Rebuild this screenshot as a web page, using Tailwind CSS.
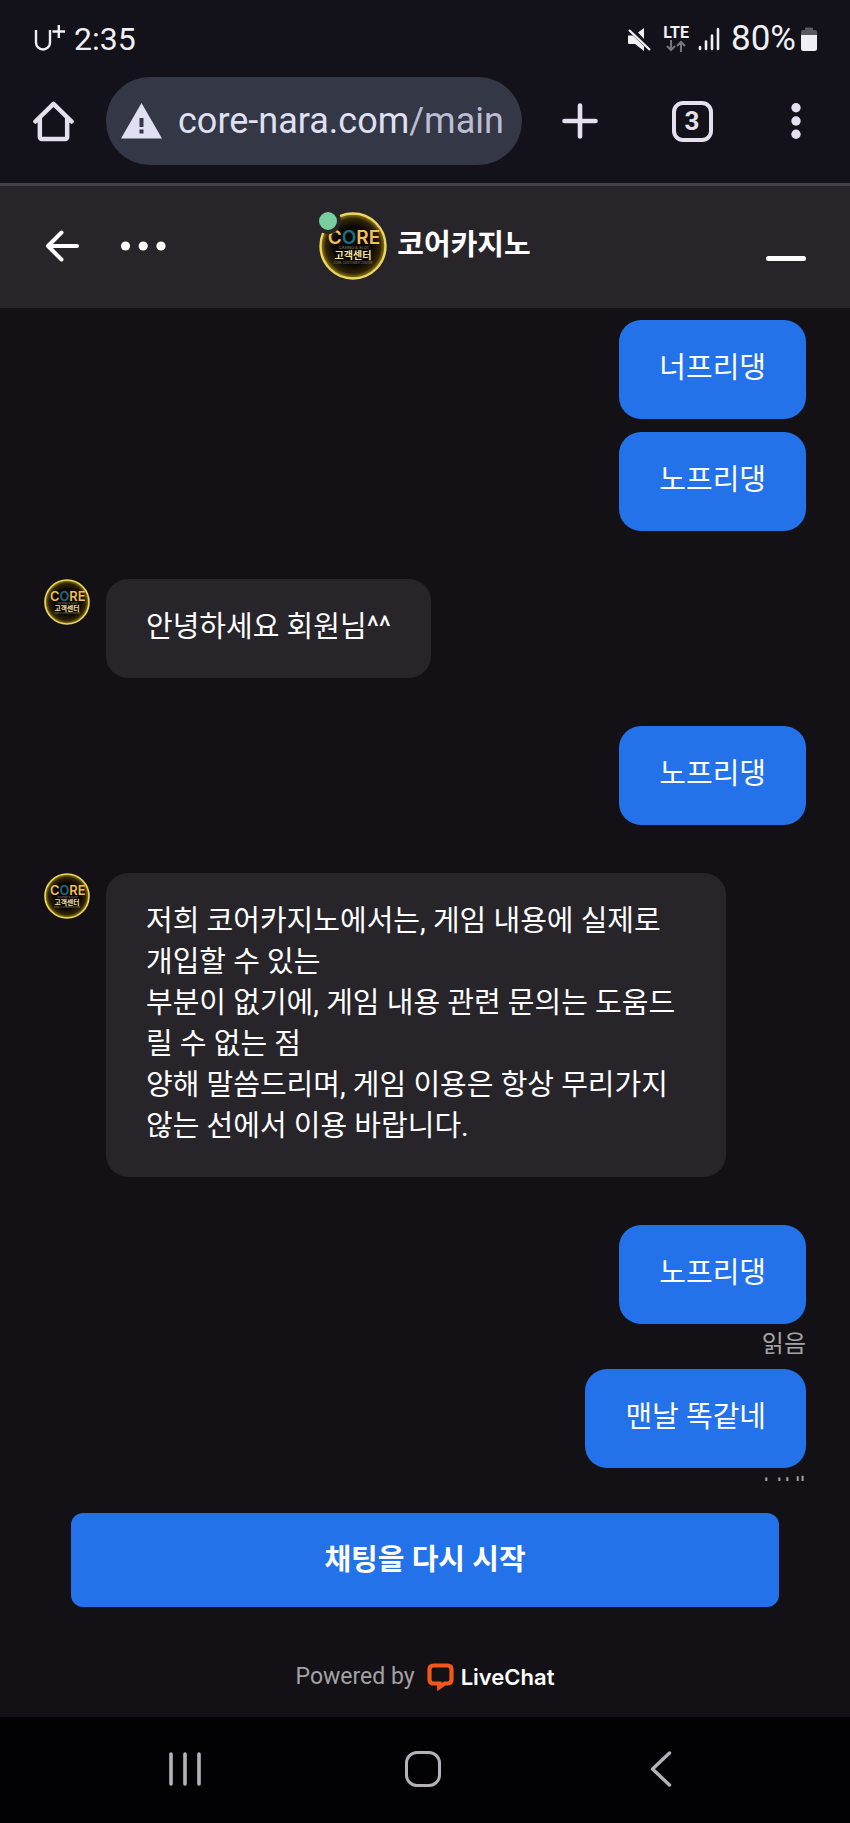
<!DOCTYPE html>
<html lang="ko">
<head>
    <meta charset="UTF-8">
    <meta name="viewport" content="width=device-width, initial-scale=1.0">
    <title>코어카지노</title>
    <script src="https://cdn.jsdelivr.net/npm/@tailwindcss/browser@4"></script>
</head>
<body class="h-screen flex flex-col bg-[#131116] text-white font-['Roboto','Noto_Sans_CJK_KR',sans-serif]">

<!-- Status bar -->
<div class="h-[77px] shrink-0 flex items-center justify-between pl-[34px] pr-8 bg-[#13111a] text-[#f0eff4] leading-[36px]">
    <div class="flex items-center gap-2 text-[32px]">
        <svg class="w-8 h-7" viewBox="0 0 32 28" fill="none" stroke="currentColor" stroke-width="2.400">
            <path d="M2 5v12.500a7 7 0 0 0 14 0V5M18.500 6.500H31M24.800 0v13"/>
        </svg>
        <span>2:35</span>
    </div>
    <div class="flex items-center text-[35px]">
        <svg class="w-6 h-6" viewBox="0 0 24 24" fill="currentColor">
            <path d="M1 8.500h5L17 19v5l-9-7H2a1 1 0 0 1-1-1zM11 5.500l6-4.500v11z"/>
            <path d="M2 1.500l21 20.500" stroke="#13111a" stroke-width="4.500"/>
            <path d="M2 3l21 20" stroke="currentColor" stroke-width="2.400"/>
        </svg>
        <div class="ml-3 flex flex-col items-center">
            <span class="text-[16px] leading-[14px] font-bold">LTE</span>
            <svg class="w-5 h-3" viewBox="0 0 20 12" fill="none" stroke="#77757d" stroke-width="2">
                <path d="M5 0v10M1 6l4 4 4-4M15 12V2M11 6l4-4 4 4"/>
            </svg>
        </div>
        <svg class="ml-2 w-6 h-6" viewBox="0 0 24 24" fill="none" stroke="currentColor" stroke-width="2.600" stroke-linecap="round">
            <path d="M3 20v2M9 14.500V22M15 8.500V22M21 2v20"/>
        </svg>
        <span class="ml-2.5">80%</span>
        <svg class="ml-1 w-[18px] h-6" viewBox="0 0 18 24">
            <path d="M5 1.500a1 1 0 0 1 1-1h6a1 1 0 0 1 1 1V3h2a2 2 0 0 1 2 2v4H1V5a2 2 0 0 1 2-2h2z" fill="#5a5960"/>
            <path d="M1 8h16v13.500a2.500 2.500 0 0 1-2.500 2.500h-11A2.500 2.500 0 0 1 1 21.500z" fill="currentColor"/>
        </svg>
    </div>
</div>

<!-- Browser toolbar -->
<nav class="h-[106px] shrink-0 flex items-start pr-1.5 bg-[#13111a] text-[#e4e0ee]">
    <button aria-label="홈" class="w-[106px] h-[88px] flex items-center justify-center">
        <svg class="w-[41px] h-[41px]" viewBox="0 0 42 42" fill="none" stroke="currentColor" stroke-width="4.600" stroke-linejoin="round" stroke-linecap="round">
            <path d="M2.500 21L21 3l18.500 18M7 17.500V37a2 2 0 0 0 2 2h24a2 2 0 0 0 2-2V17.500"/>
        </svg>
    </button>
    <button aria-label="주소창" class="flex-1 min-w-0 mr-0.5 h-[88px] pl-[15px] flex items-center gap-4 rounded-full bg-[#343746] text-[#dfe0f2]">
        <svg class="w-[41px] h-9 shrink-0" viewBox="0 0 41 36">
            <path d="M20.500 0L41 35.500H0z" fill="currentColor"/>
            <path d="M18.500 15h4v9h-4zM18.500 26.500h4v4h-4z" fill="#343746"/>
        </svg>
        <span class="text-[36px] leading-[44px] whitespace-nowrap">core-nara.com<span class="text-[#bcbdd0]">/main</span></span>
    </button>
    <button aria-label="새 탭" class="w-28 h-[88px] flex items-center justify-center">
        <svg class="w-9 h-9" viewBox="0 0 36 36" stroke="currentColor" stroke-width="4.600" stroke-linecap="round">
            <path d="M18 2.500v31M2.500 18h31"/>
        </svg>
    </button>
    <button aria-label="탭 3개" class="w-28 h-[88px] flex items-center justify-center">
        <span class="w-[41px] h-[41px] flex items-center justify-center rounded-[11px] border-4 border-current text-[26px] leading-[30px] font-bold">3</span>
    </button>
    <button aria-label="메뉴" class="w-24 h-[88px] flex items-center justify-center">
        <svg class="w-2.5 h-9" viewBox="0 0 10 36" fill="currentColor">
            <circle cx="5" cy="4.700" r="4.700"/><circle cx="5" cy="18" r="4.700"/><circle cx="5" cy="31.300" r="4.700"/>
        </svg>
    </button>
</nav>

<!-- Chat header -->
<header class="h-[125px] shrink-0 grid grid-cols-[1fr_auto_1fr] items-center px-11 pb-[3px] bg-[#27252a] border-t-3 border-[#434248]">
    <div class="flex items-center gap-10">
        <button aria-label="뒤로">
            <svg class="w-9 h-9" viewBox="0 0 36 36" fill="none" stroke="currentColor" stroke-width="4" stroke-linecap="round" stroke-linejoin="round">
                <path d="M17.500 4.500L4 18l13.500 13.500M4 18h29"/>
            </svg>
        </button>
        <button aria-label="더보기">
            <svg class="w-12 h-9" viewBox="0 0 48 36" fill="currentColor">
                <circle cx="5.500" cy="18" r="4.600"/><circle cx="23.200" cy="18" r="4.600"/><circle cx="41" cy="18" r="4.600"/>
            </svg>
        </button>
    </div>
    <div class="flex items-center gap-2.5">
        <div class="relative">
            <svg class="w-[68px] h-[68px]" viewBox="0 0 68 68">
                <defs>
                    <radialGradient id="gold">
                        <stop offset="0.6" stop-color="#0b0802"/>
                        <stop offset="0.84" stop-color="#2f2404"/>
                        <stop offset="1" stop-color="#a08620"/>
                    </radialGradient>
                </defs>
                <circle cx="34" cy="34" r="32.5" fill="url(#gold)" stroke="#ead75c" stroke-width="2.400"/>
                <g font-family="Inter, sans-serif" text-anchor="middle">
                    <text x="35" y="32" font-size="19" font-weight="600" fill="#f0bd55">C<tspan fill="#1c6c86">O</tspan>RE</text>
                    <text x="35" y="37" font-size="4" fill="#8d8778">CASINO &amp; SLOT</text>
                    <text x="34" y="47" font-size="10" font-weight="700" fill="#f3e3a4" font-family="Noto Sans CJK KR, sans-serif">고객센터</text>
                    <text x="34" y="52" font-size="3" fill="#8d8778">CORE CUSTOMER CENTER</text>
                </g>
            </svg>
            <span class="absolute -left-1 -top-1 w-[26px] h-[26px] rounded-full bg-[#79ce9f] border-4 border-[#27252a]"></span>
        </div>
        <h1 class="text-[29px] leading-[41px] font-bold">코어카지노</h1>
    </div>
    <button aria-label="최소화" class="justify-self-end h-9 flex items-end pb-[3px]">
        <span class="w-10 h-[5px] rounded-full bg-white"></span>
    </button>
</header>

<!-- Messages -->
<main class="flex-1 min-h-0 overflow-hidden flex flex-col gap-12 px-11 pt-3 text-[29px] leading-[41px]">
    <div class="flex flex-col items-end gap-[13px]">
        <p class="px-10 pt-7 pb-[30px] rounded-[22px] bg-[#2472ea]">너프리댕</p>
        <p class="px-10 pt-7 pb-[30px] rounded-[22px] bg-[#2472ea]">노프리댕</p>
    </div>
    <div class="flex items-start gap-4">
        <svg class="w-[46px] h-[46px] shrink-0" viewBox="0 0 68 68">
            <circle cx="34" cy="34" r="32.5" fill="url(#gold)" stroke="#ead75c" stroke-width="2.400"/>
            <g font-family="Inter, sans-serif" text-anchor="middle">
                <text x="35" y="32" font-size="19" font-weight="600" fill="#f0bd55">C<tspan fill="#1c6c86">O</tspan>RE</text>
                <text x="35" y="37" font-size="4" fill="#8d8778">CASINO &amp; SLOT</text>
                <text x="34" y="47" font-size="10" font-weight="700" fill="#f3e3a4" font-family="Noto Sans CJK KR, sans-serif">고객센터</text>
                <text x="34" y="52" font-size="3" fill="#8d8778">CORE CUSTOMER CENTER</text>
            </g>
        </svg>
        <p class="px-10 pt-7 pb-[30px] rounded-[22px] bg-[#27252a]">안녕하세요 회원님^^</p>
    </div>
    <div class="flex flex-col items-end">
        <p class="px-10 pt-7 pb-[30px] rounded-[22px] bg-[#2472ea]">노프리댕</p>
    </div>
    <div class="flex items-start gap-4">
        <svg class="w-[46px] h-[46px] shrink-0" viewBox="0 0 68 68">
            <circle cx="34" cy="34" r="32.5" fill="url(#gold)" stroke="#ead75c" stroke-width="2.400"/>
            <g font-family="Inter, sans-serif" text-anchor="middle">
                <text x="35" y="32" font-size="19" font-weight="600" fill="#f0bd55">C<tspan fill="#1c6c86">O</tspan>RE</text>
                <text x="35" y="37" font-size="4" fill="#8d8778">CASINO &amp; SLOT</text>
                <text x="34" y="47" font-size="10" font-weight="700" fill="#f3e3a4" font-family="Noto Sans CJK KR, sans-serif">고객센터</text>
                <text x="34" y="52" font-size="3" fill="#8d8778">CORE CUSTOMER CENTER</text>
            </g>
        </svg>
        <p class="max-w-[620px] px-10 pt-7 pb-[30px] rounded-[22px] bg-[#27252a]">저희 코어카지노에서는, 게임 내용에 실제로 개입할 수 있는<br>부분이 없기에, 게임 내용 관련 문의는 도움드릴 수 없는 점<br>양해 말씀드리며, 게임 이용은 항상 무리가지 않는 선에서 이용 바랍니다.</p>
    </div>
    <div class="flex flex-col items-end">
        <p class="px-10 pt-7 pb-[30px] rounded-[22px] bg-[#2472ea]">노프리댕</p>
        <span class="pt-[3px] pb-2 text-[24px] leading-[34px] text-[#a3a2a5]">읽음</span>
        <p class="px-10 pt-7 pb-[30px] rounded-[22px] bg-[#2472ea]">맨날 똑같네</p>
        <!-- scrolls under the footer -->
        <span class="pt-[3px] pb-2 text-[24px] leading-[34px] text-[#a3a2a5]">보냄</span>
    </div>
</main>

<footer class="shrink-0 px-[71px] pt-8 pb-6">
    <button class="w-full h-[94px] rounded-xl bg-[#2472ea] text-[29px] leading-[41px] font-bold">채팅을 다시 시작</button>
    <div class="mt-[54px] h-8 flex items-center justify-center leading-[32px]">
        <span class="text-[23px] text-[#a3a2a5]">Powered by</span>
        <a href="#" class="ml-3 flex items-center gap-[7px] text-[22px] font-['Inter',sans-serif] font-semibold">
            <svg class="w-[27px] h-7" viewBox="0 0 27 28">
                <path d="M6.500 2.500h14q4 0 4 4v10q0 4-4 4h-3L12.500 24v-3.500h-6q-4 0-4-4v-10q0-4 4-4z" fill="none" stroke="#f0581a" stroke-width="4.200"/>
                <path d="M10.400 21v7l6-5z" fill="#f0581a"/>
            </svg>
            LiveChat
        </a>
    </div>
</footer>

<!-- System navigation -->
<nav class="h-[106px] shrink-0 flex items-center pl-[66px] pr-[70px] pb-0.5 bg-[#020104] text-[#b4b2b8]">
    <button aria-label="최근 앱" class="flex-1 flex justify-center">
        <svg class="w-9 h-9" viewBox="0 0 36 36" stroke="currentColor" stroke-width="3.600" stroke-linecap="round">
            <path d="M4 3v30M18 3v30M32 3v30"/>
        </svg>
    </button>
    <button aria-label="홈 화면" class="flex-1 flex justify-center">
        <span class="w-9 h-9 rounded-xl border-3 border-current"></span>
    </button>
    <button aria-label="뒤로 가기" class="flex-1 flex justify-center">
        <svg class="w-9 h-9" viewBox="0 0 36 36" fill="none" stroke="currentColor" stroke-width="3.400" stroke-linecap="round" stroke-linejoin="round">
            <path d="M26.500 2L9.500 18l17 16"/>
        </svg>
    </button>
</nav>
</body>
</html>
